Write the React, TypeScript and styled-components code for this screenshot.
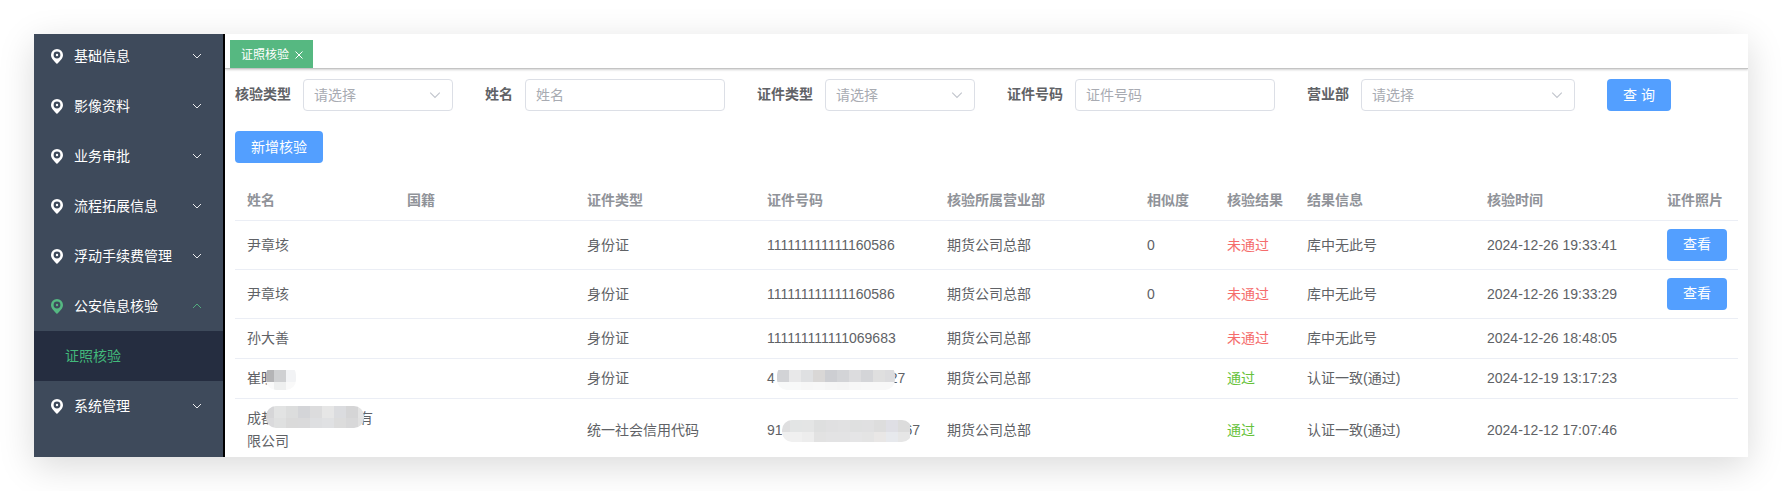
import React, { useId } from "react";
import styled, { createGlobalStyle } from "styled-components";

const GlobalStyle = createGlobalStyle`
  *, *::before, *::after { box-sizing: border-box; }
  body {
    margin: 0;
    background: #fff;
    color: #606266;
    font-family: "Liberation Sans", "Noto Sans CJK SC", sans-serif;
    font-size: 14px;
  }
  button, input, select { font: inherit; }
`;

const Page = styled.div`
  padding: 34px;
  overflow: hidden;
`;

const Window = styled.div`
  display: flex;
  height: calc(100vh - 68px);
  min-height: 240px;
  overflow: hidden;
  background: #fff;
`;

const Shadow = styled.div`
  box-shadow: 0 9px 34px rgba(0, 0, 0, 0.15);
`;

const Sidebar = styled.nav`
  flex: 0 0 191px;
  background: #3e4a5b;
  border-right: 2px solid #000;
  overflow: hidden;
`;

const MenuList = styled.ul`
  list-style: none;
  margin: -3px 0 0;
  padding: 0;
`;

const MenuButton = styled.button<{ $active?: boolean }>`
  display: flex;
  align-items: center;
  width: 100%;
  height: 50px;
  padding: 0 21px 0 17px;
  gap: 11px;
  border: 0;
  background: none;
  color: #fff;
  text-align: left;
  cursor: pointer;
  svg { color: ${(p) => (p.$active ? "#55b882" : "#fff")}; }
`;

const MenuText = styled.span`
  flex: 1;
  padding-bottom: 2px;
`;

const SubLink = styled.a`
  display: flex;
  align-items: center;
  height: 50px;
  padding: 0 0 2px 31px;
  background: #252d40;
  color: #42b97b;
  text-decoration: none;
`;

const Main = styled.main`
  flex: 1;
  min-width: 0;
  overflow: hidden;
`;

const TabBar = styled.div`
  display: flex;
  align-items: flex-end;
  height: 35px;
  padding-left: 5px;
  border-bottom: 1px solid #c4c4c4;
  box-shadow: 0 1px 2px rgba(0, 0, 0, 0.18);
`;

const Tab = styled.div`
  display: flex;
  align-items: center;
  gap: 6px;
  height: 28px;
  padding: 0 10px 2px 11px;
  background: #56b881;
  color: #fff;
  font-size: 12px;
`;

const TabClose = styled.button`
  display: flex;
  padding: 3px 0 0;
  border: 0;
  background: none;
  color: #fff;
  cursor: pointer;
`;

const Content = styled.div`
  padding: 10px;
`;

const Filters = styled.form`
  display: flex;
  gap: 32px;
  margin-bottom: 20px;
`;

const Field = styled.div`
  display: flex;
  gap: 12px;
`;

const Label = styled.label`
  line-height: 30px;
  font-weight: 700;
  white-space: nowrap;
`;

const TextInput = styled.input`
  width: 200px;
  height: 32px;
  padding: 0 10px;
  border: 1px solid #dcdfe6;
  border-radius: 4px;
  background: #fff;
  color: #606266;
  &::placeholder { color: #a8abb2; opacity: 1; }
`;

const SelectWrap = styled.div<{ $width: number }>`
  display: grid;
  align-items: center;
  width: ${(p) => p.$width}px;
  height: 32px;
  & > * { grid-area: 1 / 1; }
  svg {
    justify-self: end;
    margin-right: 12px;
    color: #c0c4cc;
    pointer-events: none;
  }
`;

const Select = styled.select`
  appearance: none;
  width: 100%;
  height: 32px;
  padding: 0 10px;
  border: 1px solid #dcdfe6;
  border-radius: 4px;
  background: #fff;
  color: #a8abb2;
`;

const PrimaryButton = styled.button`
  height: 32px;
  padding: 0 16px 2px;
  border: 0;
  border-radius: 4px;
  background: #539fff;
  color: #fff;
  white-space: nowrap;
  cursor: pointer;
`;

const ViewButton = styled(PrimaryButton)`
  display: block;
`;

const Table = styled.table`
  width: 100%;
  margin-top: 18px;
  border-collapse: separate;
  border-spacing: 0;
  table-layout: fixed;
  line-height: 23px;
  th, td {
    padding: 8px 12px;
    border-bottom: 1px solid #ebeef5;
    text-align: left;
    vertical-align: middle;
  }
  th { color: #909399; font-weight: 700; white-space: nowrap; }
`;

const Status = styled.span<{ $ok: boolean }>`
  color: ${(p) => (p.$ok ? "#67c23a" : "#f56c6c")};
`;

const NoWrap = styled.span`
  white-space: nowrap;
`;

const MaskSvg = styled.svg<{ $before: number; $after: number; $drop: number }>`
  position: relative;
  vertical-align: baseline;
  margin: -6px ${(p) => -p.$after}px ${(p) => -p.$drop}px ${(p) => -p.$before}px;
`;

const Pin = () => (
  <svg width="12" height="15" viewBox="0 0 12 15" aria-hidden="true">
    <path
      fill="currentColor"
      fillRule="evenodd"
      d="M6 0a6 6 0 0 1 6 6c0 3.600-3.400 6.200-6 9C3.400 12.200 0 9.600 0 6a6 6 0 0 1 6-6ZM6 2.600a3.400 3.400 0 1 0 0 6.800 3.400 3.400 0 0 0 0-6.800ZM6 4.800a1.200 1.200 0 1 1 0 2.400 1.200 1.200 0 0 1 0-2.400Z"
    />
  </svg>
);

const Chevron = ({ up, size = 10 }: { up?: boolean; size?: number }) => (
  <svg width={size} height={size} viewBox="0 0 10 10" fill="none" stroke="currentColor" strokeWidth="0.9" aria-hidden="true">
    <path d={up ? "M1 7l4-4 4 4" : "M1 3l4 4 4-4"} />
  </svg>
);

type MaskProps = {
  width: number;
  before: number;
  after: number;
  drop: number;
  top: string[];
  bottom: string[];
  offset?: number;
  flatTop?: boolean;
};

/* Pixelated cover for private data: two rows of 12px tiles in a rounded outline. */
const Mask = ({ width, before, after, drop, top, bottom, offset = 0, flatTop }: MaskProps) => {
  const id = useId();
  const cells = (row: string[], y: number, h: number) =>
    row.map((c, i) => (
      <rect key={`${y}-${i}`} x={i === 0 ? 0 : i * 12 - offset} y={y} width={i === 0 ? 12 - offset : 12} height={h} fill={c} />
    ));
  return (
    <MaskSvg $before={before} $after={after} $drop={drop} width={width} height={22} viewBox={`0 0 ${width} 22`} aria-hidden="true">
      <clipPath id={id}>
        <rect y={flatTop ? -5 : 0} width={width} height={flatTop ? 25 : 22} rx={10} />
      </clipPath>
      <g clipPath={`url(#${id})`}>
        {cells(top, 0, 12)}
        {cells(bottom, 12, 10)}
      </g>
    </MaskSvg>
  );
};

const menu = ["基础信息", "影像资料", "业务审批", "流程拓展信息", "浮动手续费管理", "公安信息核验", "系统管理"];

const columns: [string, string][] = [
  ["姓名", "160px"],
  ["国籍", "auto"],
  ["证件类型", "180px"],
  ["证件号码", "180px"],
  ["核验所属营业部", "200px"],
  ["相似度", "80px"],
  ["核验结果", "80px"],
  ["结果信息", "180px"],
  ["核验时间", "180px"],
  ["证件照片", "83px"],
];

type Row = {
  name: React.ReactNode;
  type: string;
  number: React.ReactNode;
  score?: string;
  ok: boolean;
  info: string;
  time: string;
  photo?: boolean;
};

const rows: Row[] = [
  { name: "尹章垓", type: "身份证", number: "111111111111160586", score: "0", ok: false, info: "库中无此号", time: "2024-12-26 19:33:41", photo: true },
  { name: "尹章垓", type: "身份证", number: "111111111111160586", score: "0", ok: false, info: "库中无此号", time: "2024-12-26 19:33:29", photo: true },
  { name: "孙大善", type: "身份证", number: "111111111111069683", ok: false, info: "库中无此号", time: "2024-12-26 18:48:05" },
  {
    name: (
      <NoWrap>
        崔旼
        <Mask
          width={30}
          before={9}
          after={0}
          drop={9}
          offset={4}
          flatTop
          top={["#b4b4b6", "#cfd0d2", "#f2f3f5"]}
          bottom={["#fafafa", "#eeefef", "#f9f9f9"]}
        />
      </NoWrap>
    ),
    type: "身份证",
    number: (
      <NoWrap>
        4
        <Mask
          width={118}
          before={-2}
          after={5}
          drop={9}
          flatTop
          top={["#d2d3d6", "#e8e8e9", "#dfe0e2", "#d9d7d6", "#cdced2", "#d3d4d7", "#dcdcde", "#d4d5d8", "#dfdfdf", "#dcdcde"]}
          bottom={["#f8f9f9", "#f8f9f9", "#f7f7f7", "#f8f8f8", "#f6f6f6", "#f5f5f5", "#f7f7f7", "#f8f8f8", "#f8f8f8", "#f8f8f8"]}
        />
        27
      </NoWrap>
    ),
    ok: true,
    info: "认证一致(通过)",
    time: "2024-12-19 13:17:23",
  },
  {
    name: (
      <>
        成都
        <Mask
          width={98}
          before={9}
          after={5}
          drop={5}
          offset={4}
          top={["#d6d6d8", "#e2e3e3", "#dcdddd", "#d4d5d8", "#dcdcdd", "#e6e6e6", "#dbdcdf", "#d5d5d6", "#e3e3e3"]}
          bottom={["#dadadc", "#dfe0e0", "#dadada", "#dadadb", "#dedfe1", "#e0e1e3", "#dcdcdc", "#d8d8d9", "#e1e1e1"]}
        />
        <span>有</span>
        <span>限公司</span>
      </>
    ),
    type: "统一社会信用代码",
    number: (
      <NoWrap>
        91
        <Mask
          width={130}
          before={1}
          after={7}
          drop={7}
          offset={4}
          top={["#dfdfe0", "#e3e5e5", "#e4e5e5", "#dedfdf", "#e0e0e1", "#e1e1e2", "#dfe0e0", "#e0e0e1", "#dddddd", "#dfdfe5", "#dcdcdc"]}
          bottom={["#efefef", "#f0f0f0", "#ededed", "#e2e2e2", "#e3e3e4", "#e3e3e4", "#e5e5e6", "#e4e4e4", "#e9e7e6", "#e7e9ed", "#e6e6e6"]}
        />
        67
      </NoWrap>
    ),
    ok: true,
    info: "认证一致(通过)",
    time: "2024-12-12 17:07:46",
  },
];

const TextField = ({ label }: { label: string }) => {
  const id = useId();
  return (
    <Field>
      <Label htmlFor={id}>{label}</Label>
      <TextInput id={id} placeholder={label} />
    </Field>
  );
};

const SelectField = ({ label, width = 150 }: { label: string; width?: number }) => {
  const id = useId();
  return (
    <Field>
      <Label htmlFor={id}>{label}</Label>
      <SelectWrap $width={width}>
        <Select id={id}>
          <option>请选择</option>
        </Select>
        <Chevron size={12} />
      </SelectWrap>
    </Field>
  );
};

export default function App() {
  return (
    <Page>
      <GlobalStyle />
      <Shadow>
        <Window>
          <Sidebar>
            <MenuList>
              {menu.map((text) => {
                const active = text === "公安信息核验";
                return (
                  <li key={text}>
                    <MenuButton type="button" $active={active} aria-expanded={active}>
                      <Pin />
                      <MenuText>{text}</MenuText>
                      <Chevron up={active} />
                    </MenuButton>
                    {active && <SubLink href="#verify">证照核验</SubLink>}
                  </li>
                );
              })}
            </MenuList>
          </Sidebar>
          <Main>
            <TabBar>
              <Tab>
                证照核验
                <TabClose type="button" aria-label="关闭">
                  <svg width="8" height="8" viewBox="0 0 8 8" stroke="currentColor" aria-hidden="true">
                    <path d="M.5.500l7 7M7.500.500l-7 7" />
                  </svg>
                </TabClose>
              </Tab>
            </TabBar>
            <Content>
              <Filters onSubmit={(e) => e.preventDefault()}>
                <SelectField label="核验类型" />
                <TextField label="姓名" />
                <SelectField label="证件类型" />
                <TextField label="证件号码" />
                <SelectField label="营业部" width={214} />
                <PrimaryButton type="submit">查 询</PrimaryButton>
              </Filters>
              <PrimaryButton type="button">新增核验</PrimaryButton>
              <Table>
                <colgroup>
                  {columns.map(([title, width]) => (
                    <col key={title} style={{ width }} />
                  ))}
                </colgroup>
                <thead>
                  <tr>
                    {columns.map(([title]) => (
                      <th key={title} scope="col">{title}</th>
                    ))}
                  </tr>
                </thead>
                <tbody>
                  {rows.map((r) => (
                    <tr key={r.time}>
                      <td>{r.name}</td>
                      <td />
                      <td>{r.type}</td>
                      <td>{r.number}</td>
                      <td>期货公司总部</td>
                      <td>{r.score}</td>
                      <td>
                        <Status $ok={r.ok}>{r.ok ? "通过" : "未通过"}</Status>
                      </td>
                      <td>{r.info}</td>
                      <td>{r.time}</td>
                      <td>{r.photo && <ViewButton type="button">查看</ViewButton>}</td>
                    </tr>
                  ))}
                </tbody>
              </Table>
            </Content>
          </Main>
        </Window>
      </Shadow>
    </Page>
  );
}
